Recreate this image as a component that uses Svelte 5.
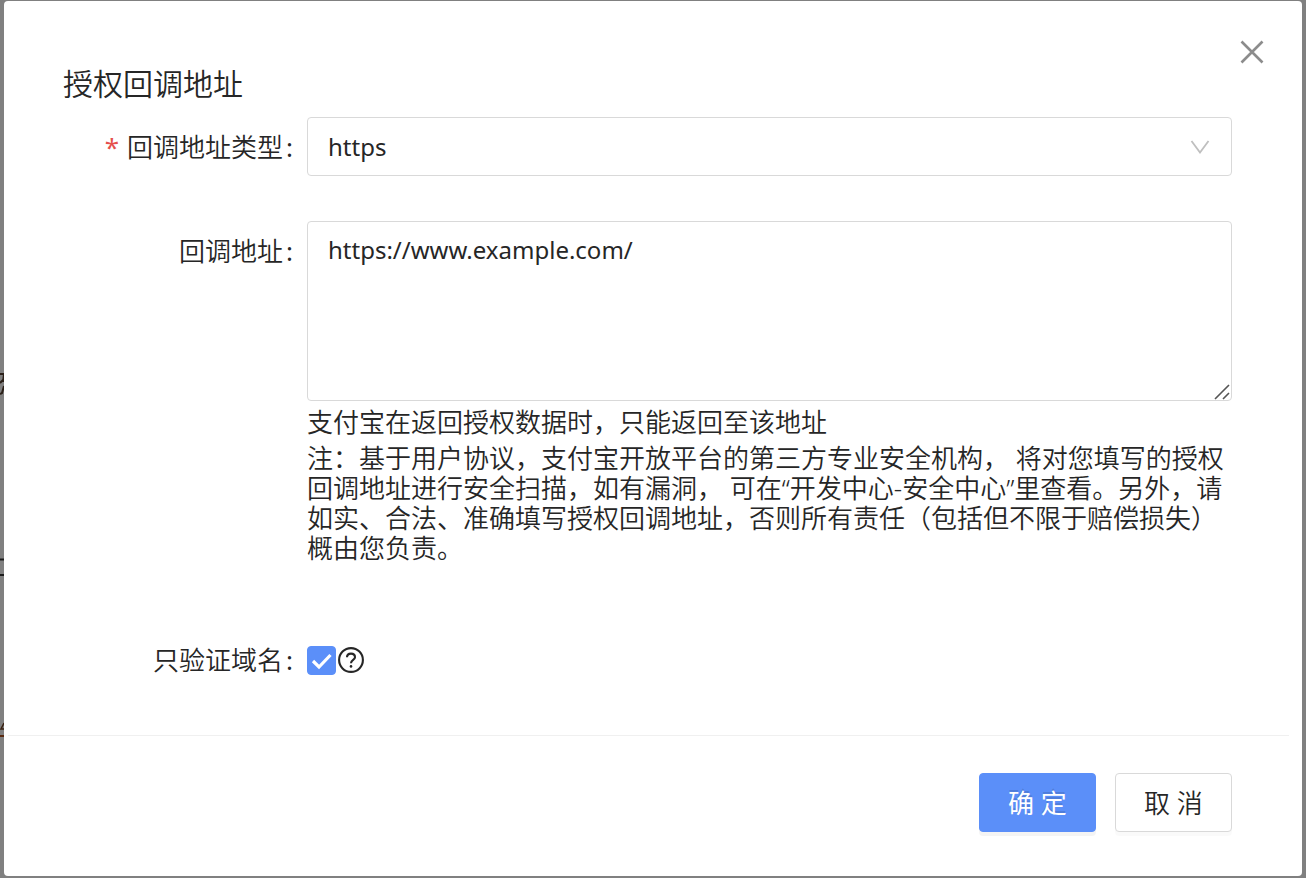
<script lang="ts">
	const types = ['https', 'http'];

	let type = $state('https');
	let url = $state('https://www.example.com/');
	let domainOnly = $state(true);
	let open = $state(true);

	function close() {
		open = false;
	}

	function submit(e: SubmitEvent) {
		e.preventDefault();
		close();
	}
</script>

<svg class="behind" viewBox="0 0 4 878" aria-hidden="true">
	<path d="M0 374H4M4 374L3 382M0 383L3 380M4 386L2 393L0 394" stroke="#2b2018" stroke-width="2" fill="none" />
	<path d="M0 559.5H4M0 575H4" stroke="#1c1c1c" stroke-width="2" />
	<path d="M4 723L1 729H4" stroke="#3a2212" stroke-width="1.5" fill="none" />
	<path d="M0 736H4" stroke="#5a2a10" stroke-width="2" />
</svg>

{#if open}
	<div class="modal" role="dialog" aria-modal="true" aria-labelledby="modal-title">
		<button class="close" type="button" aria-label="关闭" onclick={close}>
			<svg viewBox="0 0 24 24" width="24" height="24"><path d="M1.5 1.5L22.5 22.5M22.5 1.5L1.5 22.5" /></svg>
		</button>

		<form onsubmit={submit}>
			<div class="body">
				<h1 id="modal-title">授权回调地址</h1>

				<div class="row">
					<label for="type"><span class="required">*</span>回调地址类型<span class="colon">:</span></label>
					<div class="control">
						<select id="type" bind:value={type}>
							{#each types as t}
								<option value={t}>{t}</option>
							{/each}
						</select>
						<svg class="arrow" viewBox="0 0 20 14" width="20" height="14"><path d="M1.5 1L10 12.5L18.5 1" /></svg>
					</div>
				</div>

				<div class="row">
					<label for="url">回调地址<span class="colon">:</span></label>
					<div>
						<div class="control">
							<textarea id="url" bind:value={url} spellcheck="false"></textarea>
							<svg class="grip" viewBox="0 0 16 16" width="16" height="16"><path d="M1 15L15 1M9 15L15 9" /></svg>
						</div>
						<p class="hint">支付宝在返回授权数据时，只能返回至该地址</p>
						<p class="note">
							注：基于用户协议，支付宝开放平台的第三方专业安全机构， 将对您填写的授权回调地址进行安全扫描，如有漏洞， 可在“开发中心-安全中心”里查看。另外，请如实、合法、准确填写授权回调地址，否则所有责任（包括但不限于赔偿损失）概由您负责。
						</p>
					</div>
				</div>

				<div class="row check-row">
					<label for="domain">只验证域名<span class="colon">:</span></label>
					<div class="checks">
						<span class="box">
							<input id="domain" type="checkbox" bind:checked={domainOnly} />
							{#if domainOnly}
								<svg viewBox="0 0 29 29" width="29" height="29"><path d="M6 15L12 21L23.5 9" /></svg>
							{/if}
						</span>
						<svg class="help" viewBox="0 0 26 26" width="26" height="26" role="img" aria-label="帮助">
							<circle cx="13" cy="13" r="11.9" />
							<path d="M9 10.3C9 7.9 10.7 6.6 13 6.6S17 8 17 10.2C17 13 13 12.8 13 16.2" />
							<circle class="dot" cx="13" cy="19.4" r="1.3" />
						</svg>
					</div>
				</div>
			</div>

			<div class="footer">
				<button class="btn primary" type="submit">确 定</button>
				<button class="btn" type="button" onclick={close}>取 消</button>
			</div>
		</form>
	</div>
{/if}

<style>
	:global(body) {
		background: #808080;
		overflow: hidden;
	}

	.behind {
		position: absolute;
		left: 0;
		top: 0;
		width: 4px;
		height: 878px;
	}

	.modal {
		position: relative;
		margin: 1px 4px 2px;
		padding: 66px 0 44px;
		background: #fff;
		border-radius: 4px;
		color: #262626;
		font-family: 'Noto Sans', 'Noto Sans CJK SC', sans-serif;
		font-size: 26px;
		font-weight: 350;
		line-height: 30px;
	}

	button,
	select,
	textarea {
		font: inherit;
		color: inherit;
	}

	svg {
		fill: none;
	}

	.close {
		position: absolute;
		top: 39px;
		right: 38px;
		display: flex;
		padding: 0;
		border: 0;
		background: none;
		cursor: pointer;
	}

	.close svg {
		stroke: #8c8c8c;
		stroke-width: 2.6;
	}

	.body {
		padding: 0 70px 60px 59px;
	}

	h1 {
		margin: 0 0 16px;
		font-size: 30px;
		font-weight: 350;
		line-height: 34px;
	}

	.row {
		display: grid;
		grid-template-columns: 230px 1fr;
		column-gap: 14px;
		margin-bottom: 45px;
	}

	label {
		padding-top: 15px;
		text-align: right;
		white-space: nowrap;
	}

	.required {
		margin-right: 8px;
		color: #e5504c;
		font-weight: 400;
	}

	.colon {
		margin-left: 3px;
		font-weight: 400;
	}

	.control {
		position: relative;
		display: flex;
	}

	select,
	textarea {
		box-sizing: border-box;
		width: 100%;
		margin: 0;
		border: 1px solid #d9d9d9;
		border-radius: 4px;
		background: #fff;
		font-size: 24px;
		font-weight: 400;
		outline: none;
	}

	select {
		height: 59px;
		padding: 0 20px;
		appearance: none;
	}

	textarea {
		height: 180px;
		padding: 13px 20px;
		resize: none;
	}

	.arrow {
		position: absolute;
		top: 23px;
		right: 22px;
		stroke: #bfbfbf;
		stroke-width: 1.8;
		pointer-events: none;
	}

	.grip {
		position: absolute;
		right: 2px;
		bottom: 1px;
		stroke: #555;
		stroke-width: 1.6;
		pointer-events: none;
	}

	.hint,
	.note {
		margin: 6px 0 0;
	}

	.check-row {
		margin: 82px 0 0;
	}

	.check-row label {
		padding: 0;
	}

	.checks {
		display: flex;
		align-items: center;
		gap: 2px;
	}

	.box {
		display: grid;
	}

	.box input,
	.box svg {
		grid-area: 1 / 1;
	}

	.box input {
		width: 29px;
		height: 29px;
		margin: 0;
		border: 1px solid #d9d9d9;
		border-radius: 4px;
		appearance: none;
	}

	.box input:checked {
		border-color: #5b8ff9;
		background: #5b8ff9;
	}

	.box svg {
		stroke: #fff;
		stroke-width: 3.2;
		pointer-events: none;
	}

	.help {
		stroke: #262626;
		stroke-width: 2.1;
	}

	.help .dot {
		fill: #262626;
		stroke: none;
	}

	.footer {
		display: flex;
		justify-content: flex-end;
		gap: 19px;
		margin: 0 13px 0 4px;
		padding: 37px 57px 0 0;
		border-top: 1px solid #f0f0f0;
	}

	.btn {
		width: 117px;
		height: 59px;
		padding: 0;
		border: 1px solid #d9d9d9;
		border-radius: 4px;
		background: #fff;
		box-shadow: 0 4px 0 rgba(0, 0, 0, 0.02);
		cursor: pointer;
	}

	.primary {
		border-color: #5b8ff9;
		background: #5b8ff9;
		box-shadow: 0 4px 0 rgba(0, 0, 0, 0.045);
		color: #fff;
		font-weight: 400;
		text-shadow: 0 -2px 0 rgba(0, 0, 0, 0.12);
	}
</style>
